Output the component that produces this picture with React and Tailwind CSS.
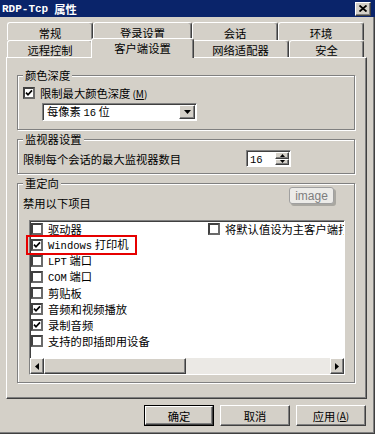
import React from "react";

const raised =
  "bg-[#d4d0c8] border border-t-white border-l-white border-r-[#404040] border-b-[#404040] shadow-[inset_-1px_-1px_0_#808080]";
const sunken =
  "border border-t-[#808080] border-l-[#808080] border-r-white border-b-white shadow-[inset_1px_1px_0_#404040]";
const group =
  "w-[338px] border border-[#808080] shadow-[inset_1px_1px_0_#fff,1px_1px_0_#fff]";
const legend = "ml-[5px] px-[2px] bg-[#d4d0c8] leading-[12px]";

const Check = ({ checked }) => (
  <span className="w-[12px] h-[12px] shrink-0 bg-white border-2 border-[#404040] border-r-[#6a6a6a] border-b-[#6a6a6a] flex items-center justify-center">
    {checked && (
      <svg width="8" height="8" viewBox="0 0 8 8">
        <path d="M1 3.6 L3 5.8 L7 1.4" fill="none" stroke="#000" strokeWidth="1.7" />
      </svg>
    )}
  </span>
);

const Mono = ({ children }) => (
  <span className="font-['Liberation_Mono',monospace] text-[10.5px]">{children}</span>
);

const Tab = ({ label, className, active }) =>
  active ? (
    <div
      className={`${className} relative z-10 h-[20px] -mt-[2px] -mb-[1px] -mx-[2px] bg-[#d4d0c8] border-t border-l border-white border-r border-r-[#404040] rounded-t-[3px] shadow-[inset_-1px_0_0_#808080] flex items-start justify-center pt-[3px]`}
    >
      {label}
    </div>
  ) : (
    <div
      className={`${className} border-t border-l border-white border-r border-r-[#404040] rounded-t-[3px] shadow-[inset_-1px_0_0_#808080] flex items-center justify-center pt-[2px]`}
    >
      {label}
    </div>
  );

const items = [
  { label: "驱动器", checked: false },
  { label: <><Mono>Windows</Mono> 打印机</>, checked: true },
  { label: <><Mono>LPT</Mono> 端口</>, checked: false },
  { label: <><Mono>COM</Mono> 端口</>, checked: false },
  { label: "剪贴板", checked: false },
  { label: "音频和视频播放", checked: true },
  { label: "录制音频", checked: true },
  { label: "支持的即插即用设备", checked: false },
];

const Row = ({ label, checked }) => (
  <div className="h-[16px] flex items-center gap-[5px] whitespace-nowrap">
    <Check checked={checked} />
    <span>{label}</span>
  </div>
);

const Button = ({ children, isDefault }) =>
  isDefault ? (
    <div className="w-[70px] h-[21px] border border-black">
      <div className={`${raised} w-full h-full flex items-center justify-center`}>{children}</div>
    </div>
  ) : (
    <div className={`${raised} w-[70px] h-[21px] flex items-center justify-center`}>{children}</div>
  );

export default function App() {
  return (
    <div className="w-[375px] h-[434px] bg-[#d4d0c8] flex flex-col text-[11.3px] leading-[12px] text-black font-['Noto_Sans_CJK_SC',sans-serif] shadow-[inset_-1px_-1px_0_#404040,inset_-2px_-2px_0_#808080] overflow-hidden">
      {/* title bar */}
      <div className="h-[17px] shrink-0 bg-[#0a246a] flex items-center justify-between pl-[2px] pr-[4px]">
        <span className="text-white font-bold flex items-center gap-[6px]">
          <span className="font-['Liberation_Mono',monospace] text-[11px]">RDP-Tcp</span>
          <span>属性</span>
        </span>
        <div className={`${raised} w-[16px] h-[14px] flex items-center justify-center`}>
          <svg width="8" height="7" viewBox="0 0 8 7">
            <path d="M0.5 0.5 L7.5 6.5 M7.5 0.5 L0.5 6.5" stroke="#000" strokeWidth="1.8" />
          </svg>
        </div>
      </div>

      {/* tabs */}
      <div className="mt-[5px] ml-[7px] flex flex-col">
        <div className="flex h-[18px]">
          <Tab label="常规" className="w-[86px]" />
          <Tab label="登录设置" className="w-[99px]" />
          <Tab label="会话" className="w-[86px]" />
          <Tab label="环境" className="w-[86px]" />
        </div>
        <div className="flex items-start h-[17px]">
          <Tab label="远程控制" className="w-[86px] h-[17px]" />
          <Tab label="客户端设置" className="w-[103px]" active />
          <Tab label="网络适配器" className="w-[97px] h-[17px]" />
          <Tab label="安全" className="w-[75px] h-[17px]" />
        </div>
      </div>

      {/* panel */}
      <div className="ml-[6px] w-[361px] h-[342px] shrink-0 border-t border-l border-white border-r border-b border-r-[#404040] border-b-[#404040] shadow-[inset_-1px_-1px_0_#808080] pt-[11px] pl-[10px] flex flex-col">
        <fieldset className={`${group} pb-[8px]`}>
          <legend className={legend}>颜色深度</legend>
          <div className="mt-[5px] h-[14px] pl-[5px] flex items-center gap-[5px]">
            <Check checked />
            <span>
              限制最大颜色深度<span className="text-[10px] ml-[2px]">(<span className="underline">M</span>)</span>
            </span>
          </div>
          <div className={`${sunken} ml-[24px] mt-[3px] w-[155px] h-[18px] bg-white p-[1px] flex items-center justify-between`}>
            <span className="pl-[3px] whitespace-nowrap">
              每像素 <Mono>16</Mono> 位
            </span>
            <div className={`${raised} w-[16px] h-[14px] flex items-center justify-center`}>
              <svg width="7" height="4" viewBox="0 0 7 4">
                <polygon points="0,0 7,0 3.5,4" fill="#000" />
              </svg>
            </div>
          </div>
        </fieldset>

        <fieldset className={`${group} mt-[3px] pb-[6px]`}>
          <legend className={legend}>监视器设置</legend>
          <div className="mt-[5px] h-[17px] pl-[5px] flex items-center">
            <span>限制每个会话的最大监视器数目</span>
            <div className={`${sunken} ml-auto mr-[63px] w-[45px] h-[17px] bg-white p-[1px] flex items-center`}>
              <span className="pl-[2px] flex-1">
                <Mono>16</Mono>
              </span>
              <div className="w-[14px] h-full flex flex-col">
                <div className={`${raised} flex-1 flex items-center justify-center`}>
                  <svg width="5" height="3" viewBox="0 0 5 3">
                    <polygon points="0,3 5,3 2.5,0" fill="#000" />
                  </svg>
                </div>
                <div className={`${raised} flex-1 flex items-center justify-center`}>
                  <svg width="5" height="3" viewBox="0 0 5 3">
                    <polygon points="0,0 5,0 2.5,3" fill="#000" />
                  </svg>
                </div>
              </div>
            </div>
          </div>
        </fieldset>

        <fieldset className={`${group} mt-[3px] pb-[7px]`}>
          <legend className={legend}>重定向</legend>
          <div className="flex items-start pl-[5px]">
            <span className="mt-[8px]">禁用以下项目</span>
            <div className="ml-auto mr-[20px] -mt-[2px] w-[45px] h-[17px] rounded-[3px] border border-[#a0a0a0] bg-[#ecebe8] shadow-[2px_2px_0_#a9a7a1] flex items-center justify-center text-[12px] text-[#7d7d7d] font-['Liberation_Sans',sans-serif]">
              image
            </div>
          </div>

          <div className="relative ml-[11px] mt-[11px] w-[316px]">
            <div className={`${sunken} h-[155px] bg-white flex flex-col overflow-hidden`}>
              <div className="flex-1 flex overflow-hidden pl-[1px]">
                <div className="w-[177px] shrink-0 flex flex-col">
                  {items.map((it, i) => (
                    <Row key={i} label={it.label} checked={it.checked} />
                  ))}
                </div>
                <div className="flex flex-col">
                  <Row label="将默认值设为主客户端打印机" checked={false} />
                </div>
              </div>
              <div className="h-[16px] shrink-0 flex">
                <div className={`${raised} w-[14px] h-full flex items-center justify-center`}>
                  <svg width="4" height="7" viewBox="0 0 4 7">
                    <polygon points="4,0 4,7 0,3.5" fill="#000" />
                  </svg>
                </div>
                <div className={`${raised} w-[142px] h-full`} />
                <div className="flex-1 h-full bg-[#ebe9e5]" />
                <div className={`${raised} w-[14px] h-full flex items-center justify-center`}>
                  <svg width="4" height="7" viewBox="0 0 4 7">
                    <polygon points="0,0 0,7 4,3.5" fill="#000" />
                  </svg>
                </div>
              </div>
            </div>
            <div className="absolute left-[-3px] top-[15px] w-[111px] h-[20px] border-2 border-[#e60000] pointer-events-none" />
          </div>
        </fieldset>
      </div>

      {/* buttons */}
      <div className="mt-[6px] pr-[9px] flex justify-end gap-[6px]">
        <Button isDefault>确定</Button>
        <Button>取消</Button>
        <Button>
          应用<span className="text-[10px] ml-[1px]">(<span className="underline">A</span>)</span>
        </Button>
      </div>
    </div>
  );
}
